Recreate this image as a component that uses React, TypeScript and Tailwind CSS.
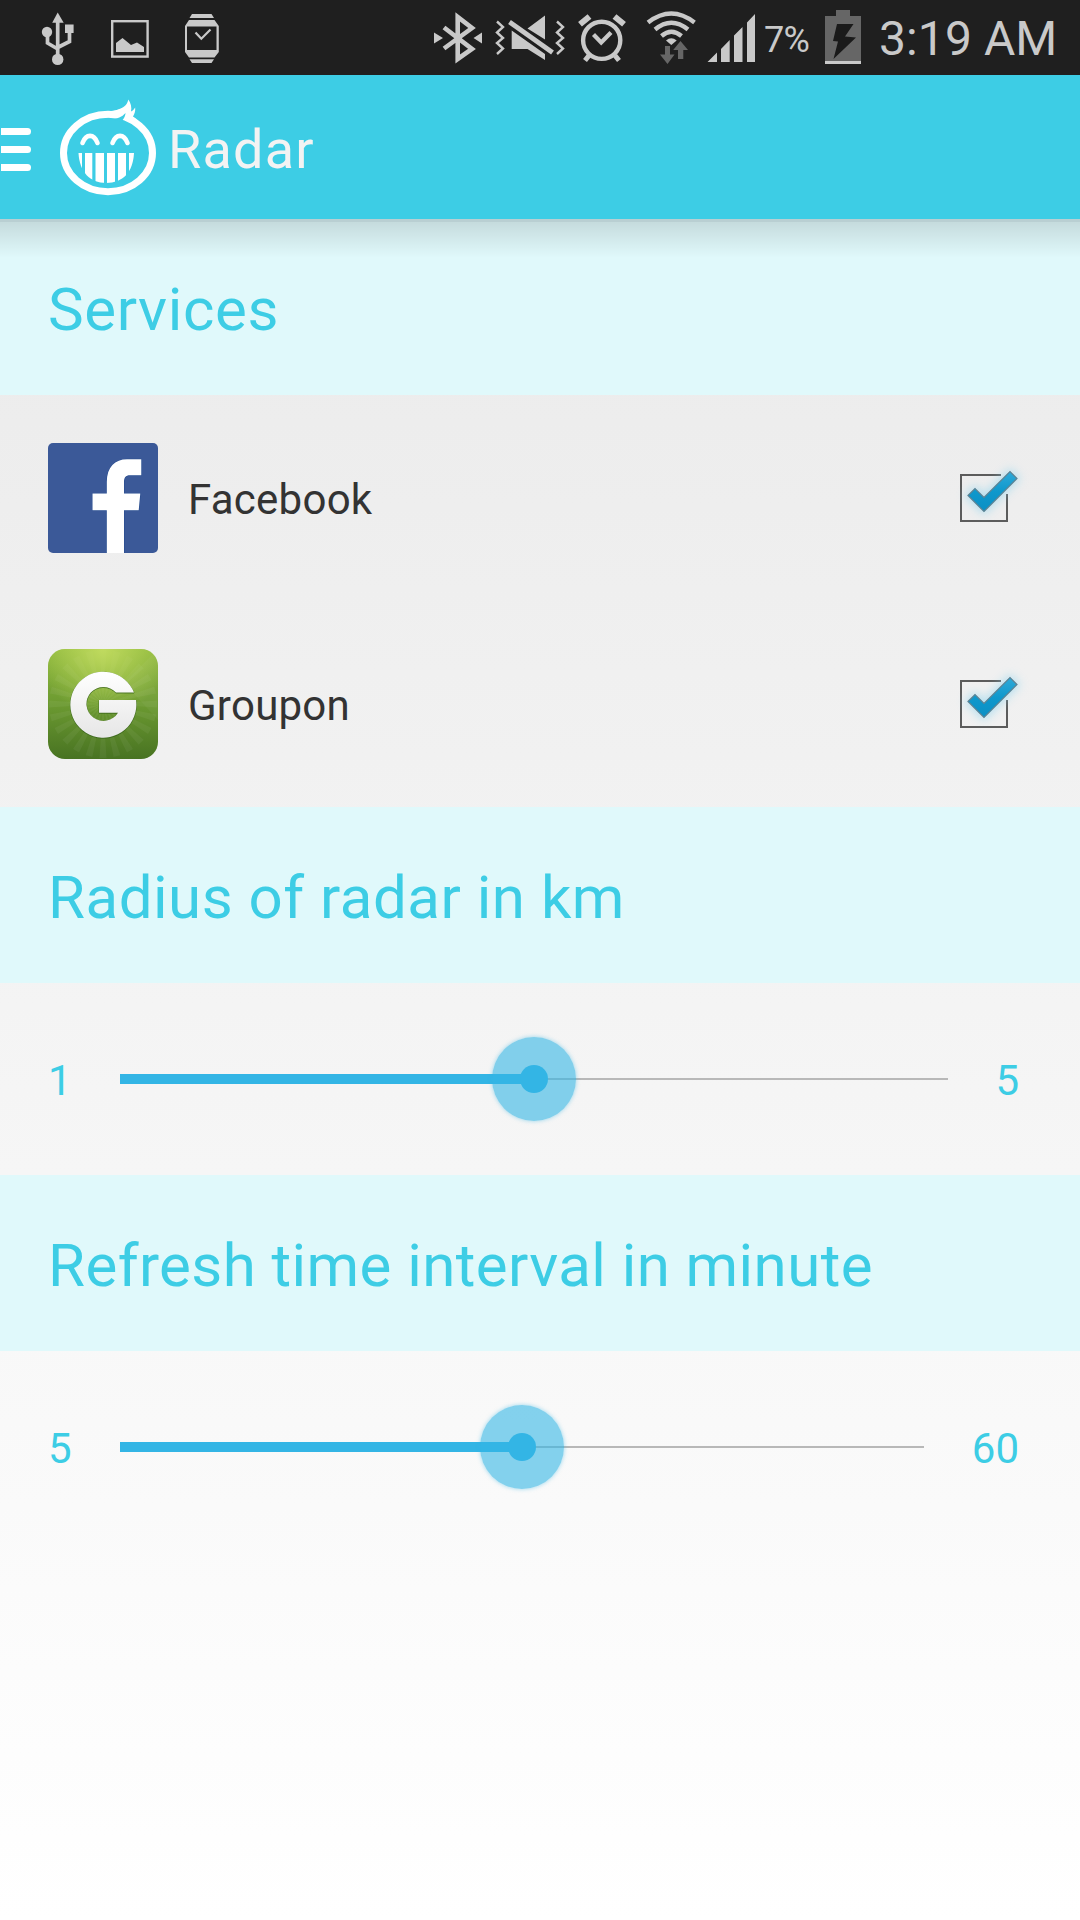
import { useState } from "react";

type Service = { id: string; name: string };

const services: Service[] = [
  { id: "facebook", name: "Facebook" },
  { id: "groupon", name: "Groupon" },
];

function StatusBar() {
  return (
    <div className="h-[75px] bg-[#1f1f1f] text-[#c9c9c9] flex items-start">
      {/* USB */}
      <svg className="ml-10 w-9 h-[75px]" viewBox="40 0 36 75" fill="currentColor">
        <path d="M57.7 12.5L63.7 22.8H52.2z" />
        <circle cx="47" cy="32" r="5.2" />
        <rect x="65" y="24.5" width="8.6" height="8.5" />
        <circle cx="57.7" cy="59.4" r="5.7" />
        <path d="M57.7 20V56M47.5 34V43L57.7 49M69.5 32V41.5L57.7 47.5" fill="none" stroke="currentColor" strokeWidth="3.7" />
      </svg>
      {/* Screenshot saved */}
      <svg className="ml-[34px] w-10 h-[75px]" viewBox="110 0 40 75" fill="currentColor">
        <rect x="112.2" y="21.2" width="35.4" height="35.4" fill="none" stroke="currentColor" strokeWidth="2.4" />
        <path d="M116 43L122.5 38L131 45L137 42.5L144 47V52H116z" />
      </svg>
      {/* Watch */}
      <svg className="ml-[34px] w-9 h-[75px]" viewBox="184 0 36 75" fill="currentColor">
        <path d="M192 14H211.5L214 18H189.5zM189.5 59.3H214L211.5 63H192z" />
        <path
          fillRule="evenodd"
          d="M189 20H214.5L218.8 26V52L214.5 57.5H189L185 52V26zM187 26.5V50H216.5V26.5z"
        />
        <path d="M195.5 32.5L201.3 38.7L210.5 29.5" fill="none" stroke="currentColor" strokeWidth="2.2" />
      </svg>

      {/* Bluetooth */}
      <svg className="ml-[212px] w-[52px] h-[75px]" viewBox="432 0 52 75" fill="currentColor">
        <path d="M434 32.5L443 38L434 43.5zM482 32.5V43.5L473.5 38z" />
        <path d="M444 27.5L472 49L457.7 59V17L472 28L444 48.5" fill="none" stroke="currentColor" strokeWidth="4.6" />
      </svg>
      {/* Vibrate */}
      <svg className="ml-2 w-[76px] h-[75px]" viewBox="492 0 76 75" fill="currentColor">
        <path
          d="M497 21.5L503 27L497 32.5L503 38L497 43L503 48.5L497 54M557 21.5L563 27L557 32.5L563 38L557 43L563 48.5L557 54"
          fill="none"
          stroke="currentColor"
          strokeWidth="2.4"
        />
        <path d="M527.5 28.5L545 15.5V39.5zM511.7 30.5L545 54V60L527.5 49H511.7z" />
        <path d="M509.5 22L552.5 52.5" stroke="currentColor" strokeWidth="4.8" />
      </svg>
      {/* Alarm */}
      <svg className="ml-2 w-[52px] h-[75px]" viewBox="576 0 52 75" fill="none" stroke="currentColor">
        <circle cx="601.7" cy="40.3" r="18.6" strokeWidth="4.4" />
        <path d="M593.5 34.5L601.2 42.5L611 32.5" strokeWidth="4.2" />
        <path d="M580 24.3L589.5 16.5M624 24.3L614.5 16.5" strokeWidth="6" />
        <path d="M589 55.5L585 60.5M615 55.5L619 60.5" strokeWidth="5" />
      </svg>
      {/* Wi-Fi */}
      <svg className="ml-4 w-[54px] h-[75px]" viewBox="644 0 54 75" fill="currentColor">
        <path
          d="M648 22.5Q671.3 4.5 694.5 22.5M655 29.5Q671.3 16 688 29.5M661.5 36Q671.3 27.5 681.5 36"
          fill="none"
          stroke="currentColor"
          strokeWidth="4.4"
        />
        <path d="M666 40.5Q671.3 36 676.7 40.5L671.3 45z" />
        <path d="M665 46H670V54.5H674.5L667.5 64L660 54.5H665zM678 59V50H673.2L680.5 41L688 50H683.3V59z" fill="#666" />
      </svg>
      {/* Signal */}
      <svg className="ml-2 w-[52px] h-[75px]" viewBox="706 0 52 75" fill="currentColor">
        <path d="M707.5 62L717 52.5V62zM721 62V49L729.7 40V62zM734 62V35.5L742.5 27V62zM747 62V22.5L755 14V62z" />
      </svg>
      <span className="ml-[6px] w-[46px] mt-[19px] text-[36px] leading-[42px] tracking-[-0.8px]">7%</span>
      {/* Battery */}
      <svg className="ml-[14px] w-10 h-[75px]" viewBox="824 0 40 75">
        <path d="M836 10H850V16H861V61H825V16H836z" fill="#666" />
        <path d="M825 61H861V64H825z" fill="currentColor" />
        <path d="M837 24H853.5L845 36.5L856 37.5L833.5 59L838 41.5L833 41z" fill="#1a1a1a" />
      </svg>
      <span className="ml-[15px] mt-[11px] text-[48px] leading-[56px] tracking-[0.1px] whitespace-nowrap">3:19 AM</span>
    </div>
  );
}

function Logo() {
  return (
    <svg className="w-[100px] h-[144px]" viewBox="58 75 100 144" fill="none" stroke="#fff">
      <ellipse cx="108" cy="153" rx="44.5" ry="38.7" strokeWidth="7" />
      <path
        d="M104 111.2C114 111.5 127 109 128.3 99.5C130.8 103 132 107.5 131 111.5C133 110.5 134.3 109 135.2 107.5C135.5 111.5 134.5 114 133 116.5L137 120L123 120L122 117C117 115 110 117.5 104 117.8z"
        fill="#fff"
        stroke="none"
      />
      <path d="M112 119.5C117 119 122 117 125.5 113C125.5 115 124.5 117.5 123 119.5L121.5 121.5z" fill="#3dcde5" stroke="none" />
      <path d="M82.5 143C86 133.5 94 133.5 97.5 143M112.5 143C116 133.5 124 133.5 127.5 143" strokeWidth="4.6" strokeLinecap="round" />
      <clipPath id="mouth">
        <path d="M78.5 153H134C133 172 123 183 106 183C90 183 79.5 172 78.5 153z" />
      </clipPath>
      <path
        clipPath="url(#mouth)"
        d="M78 153H82V190H78zM85 153H92.3V190H85zM95.5 153H104V190H95.5zM107 153H115V190H107zM118 153H126V190H118zM129 153H135V190H129z"
        fill="#fff"
        stroke="none"
      />
    </svg>
  );
}

function ActionBar() {
  return (
    <header className="relative z-10 h-36 bg-[#3dcde5] flex items-center">
      <div className="mt-[5px] ml-px flex flex-col gap-[11px]">
        <span className="w-[30px] h-[7px] rounded-r-full bg-white" />
        <span className="w-[30px] h-[7px] rounded-r-full bg-white" />
        <span className="w-[30px] h-[7px] rounded-r-full bg-white" />
      </div>
      <div className="ml-[27px]">
        <Logo />
      </div>
      <h1 className="ml-[10px] pt-[5px] text-[54px] leading-[64px] tracking-[1.2px] text-[#f3f3f3]">Radar</h1>
      <div className="absolute left-0 top-full w-full h-[3px] bg-[#b9cfd2]" />
      <div className="absolute left-0 top-[147px] w-full h-9 bg-linear-to-b from-black/12 to-transparent" />
    </header>
  );
}

function SectionTitle({ children, className }: { children: string; className: string }) {
  return (
    <h2 className={`h-44 pt-[5px] px-12 bg-[#e0f9fb] flex items-center text-[60px] leading-[70px] text-[#3dcde5] ${className}`}>
      {children}
    </h2>
  );
}

function FacebookIcon() {
  return (
    <svg className="w-[110px] h-[110px]" viewBox="48 443 110 110">
      <rect x="48" y="443" width="110" height="110" rx="5" fill="#3b5998" />
      <path
        d="M106.8 553V510.3H92.5V493.5H106.8V482C106.8 467 115 459.3 127 459.3H141.3V475.3H130C125.5 475.3 124 478 124 482V493.5H140.3L138.7 510.3H124V553z"
        fill="#fff"
        stroke="#244a8e"
        strokeWidth="1"
        paintOrder="stroke"
      />
    </svg>
  );
}

function GrouponIcon() {
  const rays = Array.from({ length: 24 }, (_, i) => i * 15);
  return (
    <svg className="w-[110px] h-[110px]" viewBox="48 649 110 110">
      <defs>
        <linearGradient id="green" x1="0" y1="0" x2="0" y2="1">
          <stop offset="0" stopColor="#8fb93d" />
          <stop offset="0.5" stopColor="#6c9a31" />
          <stop offset="1" stopColor="#487322" />
        </linearGradient>
        <radialGradient id="glow" cx="0.5" cy="0" r="0.6">
          <stop offset="0" stopColor="#c5de62" stopOpacity="0.9" />
          <stop offset="1" stopColor="#c5de62" stopOpacity="0" />
        </radialGradient>
        <linearGradient id="letter" x1="0" y1="0" x2="0" y2="1">
          <stop offset="0" stopColor="#fff" />
          <stop offset="1" stopColor="#e6e6e6" />
        </linearGradient>
        <clipPath id="tile">
          <rect x="48" y="649" width="110" height="110" rx="17" />
        </clipPath>
      </defs>
      <g clipPath="url(#tile)">
        <rect x="48" y="649" width="110" height="110" fill="url(#green)" />
        {rays.map(angle => (
          <path key={angle} d="M103 704L99.5 650H106.5z" fill="#fff" opacity="0.05" transform={`rotate(${angle} 103 704)`} />
        ))}
        <rect x="48" y="649" width="110" height="110" fill="url(#glow)" />
        <path d="M154 653L124 683L158 720V649z" fill="#fff" opacity="0.04" />
      </g>
      <path
        d="M134 692.5A33 33 0 1 0 136 700H99V712.7H118A17 17 0 1 1 116 692.5z"
        fill="#35611a"
        opacity="0.7"
        transform="translate(0 0.5)"
        stroke="#35611a"
      />
      <path d="M134 692.5A33 33 0 1 0 136 700H99V712.7H118A17 17 0 1 1 116 692.5z" fill="url(#letter)" />
    </svg>
  );
}

function Checkbox({ checked, onChange, label }: { checked: boolean; onChange: () => void; label: string }) {
  return (
    <button type="button" role="checkbox" aria-checked={checked} aria-label={label} onClick={onChange}>
      <svg className="w-24 h-24" viewBox="942 450 96 96">
        {checked ? (
          <>
            <defs>
              <filter id="halo" x="-50%" y="-50%" width="200%" height="200%">
                <feGaussianBlur stdDeviation="5" />
              </filter>
              <linearGradient id="tick" x1="0" y1="0" x2="0" y2="1">
                <stop offset="0" stopColor="#2fa9d8" />
                <stop offset="0.5" stopColor="#0f98cc" />
                <stop offset="1" stopColor="#0b8fc4" />
              </linearGradient>
            </defs>
            <path d="M1001 475H961V521H1007V494" fill="none" stroke="#5c5c5c" strokeWidth="2" />
            <path
              d="M968 495.5L975 488.5L984 497.5L1010 471.5L1017 478.5L984 511.5z"
              fill="#8fd4ee"
              stroke="#8fd4ee"
              strokeWidth="5"
              opacity="0.6"
              filter="url(#halo)"
            />
            <path d="M968 495.5L975 488.5L984 497.5L1010 471.5L1017 478.5L984 511.5z" fill="url(#tick)" stroke="#5c8293" strokeWidth="1.2" />
          </>
        ) : (
          <rect x="961" y="475" width="46" height="46" fill="none" stroke="#5c5c5c" strokeWidth="2" />
        )}
      </svg>
    </button>
  );
}

type SliderProps = { min: number; max: number; percent: number; minClass: string; maxClass: string };

function Slider({ min, max, percent, minClass, maxClass }: SliderProps) {
  return (
    <div className="h-48 pl-12 pr-[61px] flex items-center text-[42px] leading-[50px] text-[#3dcde5]">
      <span className={`pt-[3px] ${minClass}`}>{min}</span>
      <div className="relative flex-1 h-[84px] flex items-center">
        <div className="w-full h-[2px] bg-[#b8b8b8]" />
        <div className="absolute left-0 h-[10px] bg-[#33b5e5]" style={{ width: `${percent}%` }} />
        <div
          className="absolute size-[84px] -translate-x-1/2 rounded-full bg-[#33b5e5]/60 shadow-[0_0_4px_#33b5e580] flex items-center justify-center"
          style={{ left: `${percent}%` }}
        >
          <div className="size-7 rounded-full bg-[#33b5e5]" />
        </div>
      </div>
      <span className={`pt-[3px] text-right ${maxClass}`}>{max}</span>
    </div>
  );
}

export default function App() {
  const [enabled, setEnabled] = useState<Record<string, boolean>>({ facebook: true, groupon: true });

  function toggle(id: string) {
    setEnabled(prev => ({ ...prev, [id]: !prev[id] }));
  }

  return (
    <div className="w-[1080px] h-[1920px] overflow-hidden bg-linear-to-b from-[#e8e8e8] to-white font-['Roboto',sans-serif]">
      <StatusBar />
      <ActionBar />
      <main>
        <SectionTitle className="tracking-[0.6px]">Services</SectionTitle>
        <ul>
          {services.map(service => (
            <li key={service.id} className="h-[206px] pl-12 pr-[42px] flex items-center">
              {service.id === "facebook" ? <FacebookIcon /> : <GrouponIcon />}
              <span className="ml-[30px] pt-1 flex-1 text-[42px] leading-[50px] tracking-[0.25px] text-[#333]">{service.name}</span>
              <Checkbox checked={enabled[service.id]} onChange={() => toggle(service.id)} label={service.name} />
            </li>
          ))}
        </ul>

        <SectionTitle className="tracking-[0.52px]">Radius of radar in km</SectionTitle>
        <Slider min={1} max={5} percent={50} minClass="w-[72px]" maxClass="w-[71px]" />

        <SectionTitle className="tracking-[0.42px]">Refresh time interval in minute</SectionTitle>
        <Slider min={5} max={60} percent={50} minClass="w-[72px]" maxClass="w-[95px]" />
      </main>
    </div>
  );
}
